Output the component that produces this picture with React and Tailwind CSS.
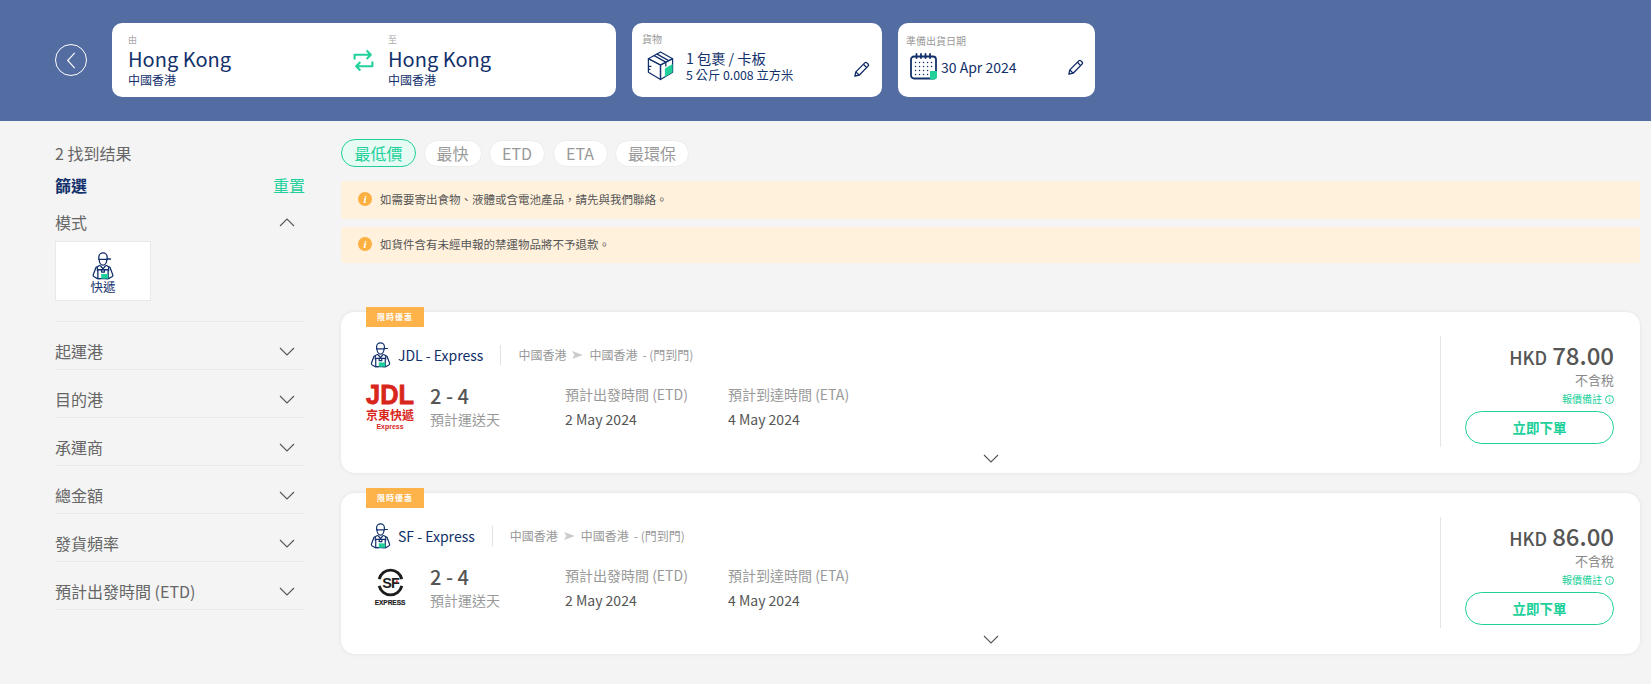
import React from "react";

const ChevronDown = ({ cls = "" }) => (
  <svg viewBox="0 0 16 9" className={cls} fill="none" stroke="#555" strokeWidth="1.1"><path d="M1 1l7 7 7-7" /></svg>
);
const ChevronUp = ({ cls = "" }) => (
  <svg viewBox="0 0 16 9" className={cls} fill="none" stroke="#555" strokeWidth="1.1"><path d="M1 8l7-7 7 7" /></svg>
);
const Pencil = () => (
  <svg viewBox="0 0 18 18" className="w-[17px] h-[17px]" fill="none" stroke="#0f2a66" strokeWidth="1.4" strokeLinejoin="round">
    <path d="M2 16l1-4.500L12.500 2a1.600 1.600 0 012.200 0l1.200 1.200a1.600 1.600 0 010 2.200L6.500 15 2 16z" />
    <path d="M11 3.500L14.500 7M3 11.500L6.500 15" />
  </svg>
);
const Worker = ({ cls = "w-[22px] h-[26px]" }) => (
  <svg viewBox="0 0 24 30" className={cls} fill="none" stroke="#12306b" strokeWidth="1.4" strokeLinejoin="round" strokeLinecap="round">
    <path d="M7.500 8V5.500a4.500 4.500 0 019 0V8z" />
    <path d="M16.500 7.500h3.500M8 8.500c0 3 1.800 5.500 4 5.500s4-2.500 4-5.500" />
    <path d="M8.500 14.500L4.500 16.500 1.500 24.500c-.3 1 .2 1.500 1 2l3.500 2h3" />
    <path d="M15.500 14.500l4 2 3 8c.3 1-.2 1.500-1 2l-3.500 2h-3" />
    <path d="M6 20v-3.500M18 20v-3.500" />
    <path d="M9.500 15l2.500 3 2.500-3" />
    <rect x="6.500" y="19" width="11" height="9.500" fill="#fff" />
    <rect x="10" y="23.500" width="7.500" height="5" fill="#21d09a" stroke="none" />
    <path d="M10.500 19v2.500h3V19" />
  </svg>
);
const Box = () => (
  <svg viewBox="0 0 30 32" className="w-[29px] h-[31px]" fill="none" stroke="#12306b" strokeWidth="1.3" strokeLinejoin="round">
    <path d="M15 15.500l12.500-6.500V23L15 30.500z" fill="#fff" />
    <path d="M27.500 14.500V23L19.500 27.800V19z" fill="#21d09a" stroke="none" />
    <path d="M15 15.500V30.500L2.500 23V9z" />
    <path d="M2.500 9L15 2l12.500 7L15 15.500z" />
    <path d="M8 5.500L20.500 12.500V17M11 4l12.500 7" />
    <path d="M2.500 17h3M2.500 20h2" />
  </svg>
);
const Calendar = () => (
  <svg viewBox="0 0 28 28" className="w-[28px] h-[28px]" fill="none" stroke="#12306b" strokeWidth="1.8" strokeLinecap="round">
    <rect x="1" y="3.500" width="25" height="22" rx="3" />
    <path d="M6.500 1v4M11 1v4M15.500 1v4M20 1v4" />
    <path d="M20 18h7v5.500a3 3 0 01-3 3h-4z" fill="#21d09a" stroke="none" />
    <g stroke="#12306b" strokeWidth="1.400" strokeDasharray="0.1 3.900">
      <path d="M5.500 9.500h17M5.500 13.500h17M5.500 17.500h13M5.500 21.500h13" />
    </g>
  </svg>
);
const Swap = () => (
  <svg viewBox="0 0 20 22" className="w-[21px] h-[23px]" fill="none" stroke="#21d09a" strokeWidth="2" strokeLinejoin="round">
    <path d="M1.500 10V5.500h15M13 1.500l4 4-4 4" />
    <path d="M18.500 12v4.500h-15M7 12.500l-4 4 4 4" />
  </svg>
);
const InfoDot = () => (
  <span className="w-[14px] h-[14px] -mt-[3px] rounded-full bg-[#fdb040] text-white text-[11px] leading-[14px] font-bold italic text-center shrink-0 font-['Liberation_Serif',serif]">i</span>
);

function Accordion({ label }) {
  return (
    <div className="h-[48px] border-b border-[#e8e8e8] flex items-center justify-between pt-[11px]">
      <span className="text-[16px] text-[#666]">{label}</span>
      <ChevronDown cls="w-[16px] h-[9px] mr-[10px]" />
    </div>
  );
}

const JdlLogo = () => (
  <div className="w-[48px] flex flex-col items-center leading-none text-[#d9261c]">
    <svg viewBox="0 0 48 21" className="w-[48px] h-[21px] overflow-visible">
      <text x="0" y="20.500" fontSize="28" fontWeight="700" fontFamily="Liberation Sans" textLength="48" lengthAdjust="spacingAndGlyphs" fill="#d9261c" stroke="#d9261c" strokeWidth="0.8">JDL</text>
    </svg>
    <span className="text-[12px] leading-[14px] mt-[4px] font-bold">京東快遞</span>
    <span className="text-[7px] leading-[9px] font-bold font-['Liberation_Sans',sans-serif]">Express</span>
  </div>
);
const SfLogo = () => (
  <div className="w-[48px] flex flex-col items-center mt-[5px]">
    <svg viewBox="0 0 28 28" className="w-[27px] h-[27px] overflow-visible">
      <path d="M2.300 10.500A12 12 0 0125.700 10.500M25.700 17.500A12 12 0 012.300 17.500" fill="none" stroke="#1d1d1d" strokeWidth="3" />
      <text x="14" y="19.500" textAnchor="middle" fontSize="15" fontWeight="700" fontFamily="Liberation Sans" letterSpacing="-1" fill="#1d1d1d">SF</text>
      <rect x="19.500" y="12" width="2" height="2" fill="#d9261c" />
    </svg>
    <span className="text-[6.500px] leading-[9px] mt-[2px] font-black text-[#1d1d1d] [-webkit-text-stroke:0.2px_#1d1d1d] font-['Liberation_Sans',sans-serif]">EXPRESS</span>
  </div>
);

function ResultCard({ name, logo, price }) {
  return (
    <div className="relative h-[161px] bg-white rounded-[14px] shadow-[0_0_4px_rgba(0,0,0,0.08)] pt-[24px] flex flex-col">
      <div className="absolute left-[25px] top-[-5px] w-[58px] h-[20px] bg-[#fdb24a] text-white text-[8px] font-bold tracking-[1px] flex items-center justify-center">限時優惠</div>
      <div className="flex h-[111px]">
        <div className="flex-1 pl-[25px]">
          <div className="flex items-center h-[38px]">
            <span className="w-[32px] pl-[4px] shrink-0"><Worker cls="w-[21px] h-[26px]" /></span>
            <span className="text-[14px] text-[#12306b]">{name}</span>
            <span className="w-px h-[20px] bg-[#e2e2e2] mx-[17px]" />
            <span className="text-[12px] text-[#999] flex items-center">
              中國香港
              <svg viewBox="0 0 12 9" className="w-[11px] h-[8px] mx-[6px]"><path d="M0 0l12 4.500L0 9l2.500-4.500z" fill="#ccc" /></svg>
              中國香港<span className="ml-[5px]">- (門到門)</span>
            </span>
          </div>
          <div className="flex mt-[7px]">
            <div className="w-[64px] shrink-0 flex pt-[2px]">{logo}</div>
            <div className="w-[135px] shrink-0">
              <div className="text-[20px] leading-[26px] mt-[2px] font-medium text-[#555]">2 - 4</div>
              <div className="text-[14px] leading-[20px] text-[#999]">預計運送天</div>
            </div>
            <div className="w-[163px] shrink-0 pt-[3px]">
              <div className="text-[14px] leading-[20px] text-[#999]">預計出發時間 (ETD)</div>
              <div className="text-[14px] leading-[20px] text-[#555] mt-[5px]">2 May 2024</div>
            </div>
            <div className="pt-[3px]">
              <div className="text-[14px] leading-[20px] text-[#999]">預計到達時間 (ETA)</div>
              <div className="text-[14px] leading-[20px] text-[#555] mt-[5px]">4 May 2024</div>
            </div>
          </div>
        </div>
        <div className="w-[200px] shrink-0 border-l border-[#e4e4e4] pl-[25px] pr-[26px] pt-[5px] flex flex-col items-end">
          <div className="h-[28px] flex items-baseline text-[#555]">
            <span className="text-[18px] leading-[28px] font-medium mr-[5px]">HKD</span>
            <span className="text-[24px] leading-[28px] font-medium">{price}</span>
          </div>
          <div className="text-[13px] leading-[18px] text-[#888] mt-[2px]">不含稅</div>
          <div className="text-[10px] leading-[16px] text-[#21d09a] flex items-center gap-[3px] mt-[2px]">
            報價備註
            <span className="w-[9px] h-[9px] rounded-full border border-[#21d09a] text-[7px] leading-[7px] text-center">i</span>
          </div>
          <button className="w-[149px] h-[33px] mt-[4px] rounded-full border border-[#21d09a] text-[#21d09a] text-[13.500px] font-bold flex items-center justify-center">立即下單</button>
        </div>
      </div>
      <div className="flex justify-center mt-[7px]"><ChevronDown cls="w-[16px] h-[9px]" /></div>
    </div>
  );
}

export default function App() {
  return (
    <div className="w-[1651px] h-[684px] overflow-hidden bg-[#f4f4f4] font-['Noto_Sans_CJK_TC','Noto_Sans',sans-serif]">
      <header className="h-[121px] bg-[#536ca1] pl-[55px] pb-[1px] flex items-center">
        <button className="w-[32px] h-[32px] rounded-full border border-white flex items-center justify-center mr-[25px]">
          <svg viewBox="0 0 10 18" className="w-[10px] h-[17px]" fill="none" stroke="#fff" strokeWidth="1.200"><path d="M9 1L1.500 9 9 17" /></svg>
        </button>
        <div className="w-[504px] h-[74px] bg-white rounded-[10px] flex pl-[16px] pt-[11px] mr-[16px]">
          <div className="w-[225px]">
            <div className="text-[9px] leading-[12px] text-[#aaa]">由</div>
            <div className="text-[20px] leading-[26px] text-[#12306b]">Hong Kong</div>
            <div className="text-[12px] leading-[16px] text-[#12306b]">中國香港</div>
          </div>
          <div className="w-[35px] pt-[15px]"><Swap /></div>
          <div>
            <div className="text-[9px] leading-[12px] text-[#aaa]">至</div>
            <div className="text-[20px] leading-[26px] text-[#12306b]">Hong Kong</div>
            <div className="text-[12px] leading-[16px] text-[#12306b]">中國香港</div>
          </div>
        </div>
        <div className="w-[250px] h-[74px] bg-white rounded-[10px] pl-[10px] pr-[12px] pt-[10px] mr-[16px]">
          <div className="text-[10px] leading-[12px] text-[#999]">貨物</div>
          <div className="flex items-center mt-[3px]">
            <span className="ml-[4px] mr-[11px] flex"><Box /></span>
            <div className="flex-1">
              <div className="text-[14.200px] leading-[20px] text-[#12306b]">1 包裹 / 卡板</div>
              <div className="text-[12.300px] leading-[15px] text-[#12306b]">5 公斤 0.008 立方米</div>
            </div>
            <span className="mt-[8px]"><Pencil /></span>
          </div>
        </div>
        <div className="w-[197px] h-[74px] bg-white rounded-[10px] pl-[8px] pr-[11px] pt-[12px]">
          <div className="text-[10px] leading-[12px] text-[#999]">準備出貨日期</div>
          <div className="flex items-center mt-[6px]">
            <span className="ml-[4px] mr-[3px] flex"><Calendar /></span>
            <span className="flex-1 text-[14px] text-[#12306b]">30 Apr 2024</span>
            <Pencil />
          </div>
        </div>
      </header>
      <div className="flex pl-[55px] pr-[11px]">
        <aside className="w-[250px] shrink-0 pt-[20px]">
          <div className="text-[16px] leading-[24px] text-[#666]">2 找到结果</div>
          <div className="flex justify-between mt-[8px] text-[16px] leading-[24px]">
            <span className="font-bold text-[#12306b]">篩選</span>
            <span className="text-[#21d09a]">重置</span>
          </div>
          <div className="flex items-center justify-between mt-[13px] h-[24px]">
            <span className="text-[16px] text-[#666]">模式</span>
            <ChevronUp cls="w-[16px] h-[9px] mr-[10px]" />
          </div>
          <div className="mt-[7px] w-[96px] h-[60px] bg-white border border-[#e8e8e8] flex flex-col items-center pt-[10px]">
            <Worker cls="w-[24px] h-[28px]" />
            <span className="text-[12.500px] leading-[13px] text-[#12306b]">快遞</span>
          </div>
          <div className="mt-[20px] border-t border-[#e8e8e8]">
            {["起運港", "目的港", "承運商", "總金額", "發貨頻率", "預計出發時間 (ETD)"].map((l) => (
              <Accordion key={l} label={l} />
            ))}
          </div>
        </aside>
        <main className="flex-1 ml-[36px] pt-[18px]">
          <div className="flex gap-[7.500px] items-center h-[28px]">
            <span className="w-[75px] h-[28px] rounded-full border border-[#21d09a] bg-[#e6fbf4] text-[#21d09a] text-[16px] flex items-center justify-center">最低價</span>
            {[["最快", "w-[58px]"], ["ETD", "w-[56px]"], ["ETA", "w-[55px]"], ["最環保", "w-[74px]"]].map(([t, w]) => (
              <span key={t} className={`${w} h-[27px] rounded-full bg-white border border-[#ececec] text-[#999] text-[16px] flex items-center justify-center`}>{t}</span>
            ))}
          </div>
          <div className="mt-[14px] h-[38px] bg-[#fff1dc] rounded-[3px] flex items-center pl-[17px] gap-[8px]">
            <InfoDot />
            <span className="text-[11.500px] text-[#555]">如需要寄出食物、液體或含電池產品，請先與我們聯絡。</span>
          </div>
          <div className="mt-[8px] h-[36px] bg-[#fff1dc] rounded-[3px] flex items-center pl-[17px] gap-[8px]">
            <InfoDot />
            <span className="text-[11.500px] text-[#555]">如貨件含有未經申報的禁運物品將不予退款。</span>
          </div>
          <div className="mt-[49px] flex flex-col gap-[20px]">
            <ResultCard name="JDL - Express" price="78.00" logo={<JdlLogo />} />
            <ResultCard name="SF - Express" price="86.00" logo={<SfLogo />} />
          </div>
        </main>
      </div>
    </div>
  );
}
